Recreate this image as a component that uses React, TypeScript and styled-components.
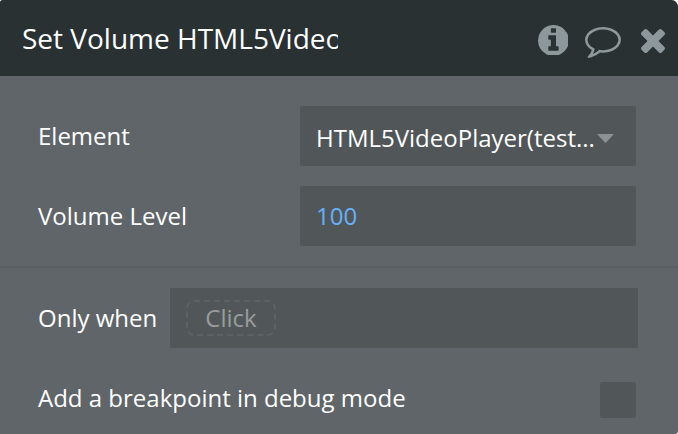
import React from "react";
import styled, { createGlobalStyle } from "styled-components";

const GlobalStyle = createGlobalStyle`
  * { box-sizing: border-box; }
  body { margin: 0; background: #fff; overflow: hidden; }
`;

const Panel = styled.main`
  width: 678px;
  height: 434px;
  background: #606569;
  color: #fff;
  font: 24px/32px "Open Sans", sans-serif;
  border-radius: 3px 7px 3px 0;
  overflow: hidden;
`;

const Header = styled.header`
  display: flex;
  align-items: center;
  justify-content: space-between;
  height: 76px;
  padding: 0 13px 0 22px;
  background: #293133;
`;

const Title = styled.h1`
  width: 316px;
  margin: 0;
  font-size: 28px;
  font-weight: 400;
  line-height: 40px;
  white-space: nowrap;
  overflow: hidden;
`;

const Actions = styled.div`
  display: flex;
  align-self: flex-start;
  align-items: flex-start;
  padding-top: 24.6px;
  color: #8c989c;
`;

const IconButton = styled.button<{ $width: number; $gap?: number; $drop?: number }>`
  display: flex;
  width: ${(p) => p.$width}px;
  margin: ${(p) => p.$drop ?? 0}px 0 0 ${(p) => p.$gap ?? 0}px;
  padding: 0;
  border: 0;
  background: none;
  color: inherit;
`;

const Glyph = styled.svg`
  display: block;
  width: 100%;
  fill: currentColor;
`;

const Fields = styled.section`
  display: flex;
  flex-direction: column;
  gap: 20px;
  height: 192px;
  padding: 30px 42px 0 38px;
  border-bottom: 2px solid #595e61;
`;

const Row = styled.div`
  display: flex;
  align-items: center;
`;

const Label = styled.label<{ $width?: number }>`
  width: ${(p) => (p.$width ? p.$width + "px" : "auto")};
  flex-shrink: 0;
  white-space: nowrap;
`;

const Field = styled.div<{ $accent?: boolean }>`
  display: flex;
  align-items: center;
  flex: 1;
  height: 60px;
  padding: 0 16px;
  border-radius: 2px;
  background: #515759;
  color: ${(p) => (p.$accent ? "#67b0fa" : "#fff")};
  white-space: nowrap;
`;

const SelectField = styled(Field)`
  padding-top: 4px;
`;

const Arrow = styled.svg`
  width: 17px;
  height: 9px;
  margin: 1px 0 0 2px;
  fill: #8c9193;
`;

const Conditions = styled.section`
  display: flex;
  flex-direction: column;
  gap: 34px;
  padding: 20px 40px 0 38px;
`;

const Placeholder = styled.span`
  display: flex;
  align-items: center;
  justify-content: center;
  width: 90px;
  height: 36px;
  border: 2px dashed #5c6164;
  border-radius: 8px;
  color: #999b9c;
`;

const BreakpointRow = styled(Row)`
  align-items: flex-start;
`;

const Checkbox = styled.div`
  width: 36px;
  height: 36px;
  margin: 0 2px 0 auto;
  border-radius: 2px;
  background: #515759;
`;

export default function App() {
  return (
    <>
      <GlobalStyle />
      <Panel>
        <Header>
          <Title>Set Volume HTML5Video</Title>
          <Actions>
            <IconButton $width={30.9} aria-label="Info">
              <Glyph viewBox="128 128 1536 1536">
                <path d="M1152 1376v-160q0-14-9-23t-23-9h-96v-512q0-14-9-23t-23-9h-320q-14 0-23 9t-9 23v160q0 14 9 23t23 9h96v320h-96q-14 0-23 9t-9 23v160q0 14 9 23t23 9h448q14 0 23-9t9-23zm-128-896v-160q0-14-9-23t-23-9h-192q-14 0-23 9t-9 23v160q0 14 9 23t23 9h192q14 0 23-9t9-23zm640 416q0 209-103 385.5t-279.5 279.5-385.5 103-385.5-103-279.5-279.5-103-385.5 103-385.5 279.5-279.5 385.5-103 385.5 103 279.5 279.5 103 385.5z" />
              </Glyph>
            </IconButton>
            <IconButton $width={36} $gap={16.6} $drop={2.6} aria-label="Comment">
              <Glyph viewBox="0 256 1792 1536">
                <path d="M896 384q-204 0-381.5 69.5t-282 187.5-104.5 255q0 112 71.5 213.5t201.5 175.5l87 50-27 96q-24 91-70 172 152-63 275-171l43-38 57 6q69 8 130 8 204 0 381.5-69.5t282-187.5 104.5-255-104.5-255-282-187.5-381.5-69.5zm896 512q0 174-120 321.5t-326 233-450 85.5q-70 0-145-8-198 175-460 242-49 14-114 22h-5q-15 0-27-10.5t-16-27.5v-1q-3-4-.5-12t2-10 4.5-9.5l6-9 7-8.5 8-9q7-8 31-34.5t34.5-38 31-39.5 32.5-51 27-59 26-76q-157-89-247.5-220t-90.5-281q0-174 120-321.5t326-233 450-85.5 450 85.5 326 233 120 321.5z" />
              </Glyph>
            </IconButton>
            <IconButton $width={24} $gap={20} $drop={4.8} aria-label="Close">
              <Glyph viewBox="302 366 1188 1188">
                <path d="M1490 1322q0 40-28 68l-136 136q-28 28-68 28t-68-28l-294-294-294 294q-28 28-68 28t-68-28l-136-136q-28-28-28-68t28-68l294-294-294-294q-28-28-28-68t28-68l136-136q28-28 68-28t68 28l294 294 294-294q28-28 68-28t68 28l136 136q28 28 28 68t-28 68l-294 294 294 294q28 28 28 68z" />
              </Glyph>
            </IconButton>
          </Actions>
        </Header>
        <Fields>
          <Row>
            <Label $width={262}>Element</Label>
            <SelectField>
              HTML5VideoPlayer(test...
              <Arrow viewBox="0 0 17 9"><path d="M0 0h17L8.5 9z" /></Arrow>
            </SelectField>
          </Row>
          <Row>
            <Label $width={262}>Volume Level</Label>
            <Field $accent>100</Field>
          </Row>
        </Fields>
        <Conditions>
          <Row>
            <Label $width={132}>Only when</Label>
            <Field><Placeholder>Click</Placeholder></Field>
          </Row>
          <BreakpointRow>
            <Label>Add a breakpoint in debug mode</Label>
            <Checkbox />
          </BreakpointRow>
        </Conditions>
      </Panel>
    </>
  );
}
